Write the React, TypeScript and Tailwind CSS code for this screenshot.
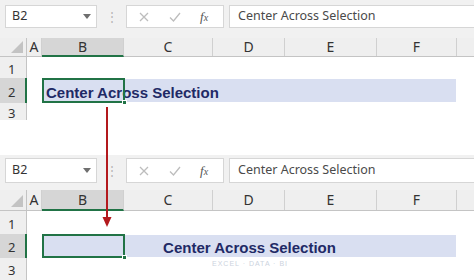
import type { ReactNode } from "react";

// Two Excel sheets stacked, showing "Center Across Selection" before / after.

const COLS = [
  { label: "A", w: "w-[15px]" },
  { label: "B", w: "w-[82px]" },
  { label: "C", w: "w-[89px]" },
  { label: "D", w: "w-[72px]" },
  { label: "E", w: "w-[92px]" },
  { label: "F", w: "w-[80px]" },
];

const FONT = { fontFamily: '"Noto Sans", "Open Sans", sans-serif' };

function Toolbar({ height, boxTop, boxH }: { height: string; boxTop: string; boxH: string }) {
  return (
    <div className={`flex items-start bg-[#f1f1f1] ${height} ${boxTop}`}>
      {/* name box */}
      <div className={`ml-[5px] w-[92px] ${boxH} flex items-center justify-between bg-white border border-[#d6d6d6] pl-[6px] pr-[5px]`}>
        <span className="text-[12.5px] text-[#333]">B2</span>
        <svg width="8" height="5" viewBox="0 0 8 5">
          <polygon points="0,0 8,0 4,5" fill="#6f6f6f" />
        </svg>
      </div>
      <div className={`w-[29px] ${boxH} flex items-center justify-center text-[#b5b5b5] text-[12px]`}>⋮</div>
      {/* cancel / enter / fx */}
      <div className={`w-[98px] ${boxH} flex items-center bg-white border border-[#d6d6d6]`}>
        <svg className="ml-[12px]" width="10" height="10" viewBox="0 0 10 10">
          <path d="M1 1 L9 9 M9 1 L1 9" stroke="#bdbdbd" strokeWidth="1.3" />
        </svg>
        <svg className="ml-[20px]" width="12" height="10" viewBox="0 0 12 10">
          <path d="M1 5.5 L4.5 9 L11 1" stroke="#bdbdbd" strokeWidth="1.3" fill="none" />
        </svg>
        <span
          className="ml-[19px] italic text-[13px] text-[#555] leading-none"
          style={{ fontFamily: '"Liberation Serif", serif' }}
        >
          f<span className="text-[10px]">x</span>
        </span>
      </div>
      <div className={`ml-[5px] flex-1 ${boxH} flex items-center bg-white border border-[#d6d6d6] border-r-0 pl-[8px]`}>
        <span className="text-[12.5px] text-[#4a4a4a]">Center Across Selection</span>
      </div>
    </div>
  );
}

function HeaderRow({ height }: { height: string }) {
  return (
    <div className={`flex ${height} bg-[#efefef] border-b border-[#c4c4c4]`}>
      <div className="w-[27px] flex items-end justify-end pr-[3px] pb-[3px] border-r border-[#c4c4c4]">
        <svg width="12" height="12" viewBox="0 0 12 12">
          <polygon points="12,0 12,12 0,12" fill="#c3c3c3" />
        </svg>
      </div>
      {COLS.map((c) => (
        <div
          key={c.label}
          className={`${c.w} flex items-center justify-center text-[14px] leading-none text-[#333] border-r border-[#d0d0d0] ${
            c.label === "B" ? "bg-[#d6d6d6] text-[#2b6a44] border-b-2 border-b-[#217346] -mb-px" : ""
          }`}
        >
          {c.label}
        </div>
      ))}
      <div className="flex-1" />
    </div>
  );
}

function RowHead({ n, active }: { n: number; active?: boolean }) {
  return (
    <div
      className={`w-[27px] flex items-center justify-start pl-[8px] pt-[3px] text-[13px] leading-none text-[#333] ${
        active ? "bg-[#d6d6d6] border-r-2 border-[#217346]" : "bg-[#efefef] border-r border-[#c4c4c4]"
      }`}
    >
      {n}
    </div>
  );
}

function Sheet({
  toolbar,
  header,
  rows,
  centered,
}: {
  toolbar: ReactNode;
  header: string;
  rows: [string, string, string];
  centered?: boolean;
}) {
  return (
    <div className="flex flex-col" style={FONT}>
      {toolbar}
      <HeaderRow height={header} />
      <div className={`flex ${rows[0]}`}>
        <RowHead n={1} />
      </div>
      <div className={`flex ${rows[1]}`}>
        <RowHead n={2} active />
        <div className="w-[15px]" />
        <div className="relative w-[413px] my-px ml-px bg-[#d9dff1] flex items-center">
          <span
            className={`mt-[3px] font-bold text-[15px] leading-none text-[#1f2a66] ${centered ? "mx-auto" : "ml-[3px]"}`}
            style={{ fontFamily: '"Liberation Sans", Arial, sans-serif' }}
          >
            Center Across Selection
          </span>
          {/* selection outline over B2 */}
          <div className="absolute -left-px -top-px w-[83px] h-[calc(100%+2px)] border-2 border-[#217346]">
            <div className="absolute -right-[4px] -bottom-[4px] w-[5px] h-[5px] bg-[#217346] border border-white" />
          </div>
        </div>
      </div>
      <div className={`flex ${rows[2]}`}>
        <RowHead n={3} />
      </div>
    </div>
  );
}

export default function App() {
  return (
    <div className="relative w-[474px] h-[280px] bg-white overflow-hidden">
      <Sheet
        toolbar={<Toolbar height="h-[38px]" boxTop="pt-[5px]" boxH="h-[23px]" />}
        header="h-[19px]"
        rows={["h-[21px]", "h-[25px]", "h-[17px]"]}
      />
      <div className="h-[35px]" />
      <Sheet
        toolbar={<Toolbar height="h-[35px]" boxTop="pt-[3px]" boxH="h-[25px]" />}
        header="h-[21px]"
        rows={["h-[23px]", "h-[24px]", "h-[22px]"]}
        centered
      />

      {/* watermark */}
      <div
        className="absolute left-[212px] top-[260px] text-[7px] leading-none tracking-[1px] text-[#ccd3de]"
        style={{ fontFamily: '"Liberation Sans", sans-serif' }}
      >
        EXCEL · DATA · BI
      </div>

      {/* red arrow from the top B2 to the bottom B2 */}
      <svg className="absolute left-0 top-0" width="474" height="280">
        <line x1="107" y1="107" x2="107" y2="220" stroke="#b3191d" strokeWidth="2" />
        <polygon points="102.5,217 111.5,217 107,227" fill="#b3191d" />
      </svg>
    </div>
  );
}
